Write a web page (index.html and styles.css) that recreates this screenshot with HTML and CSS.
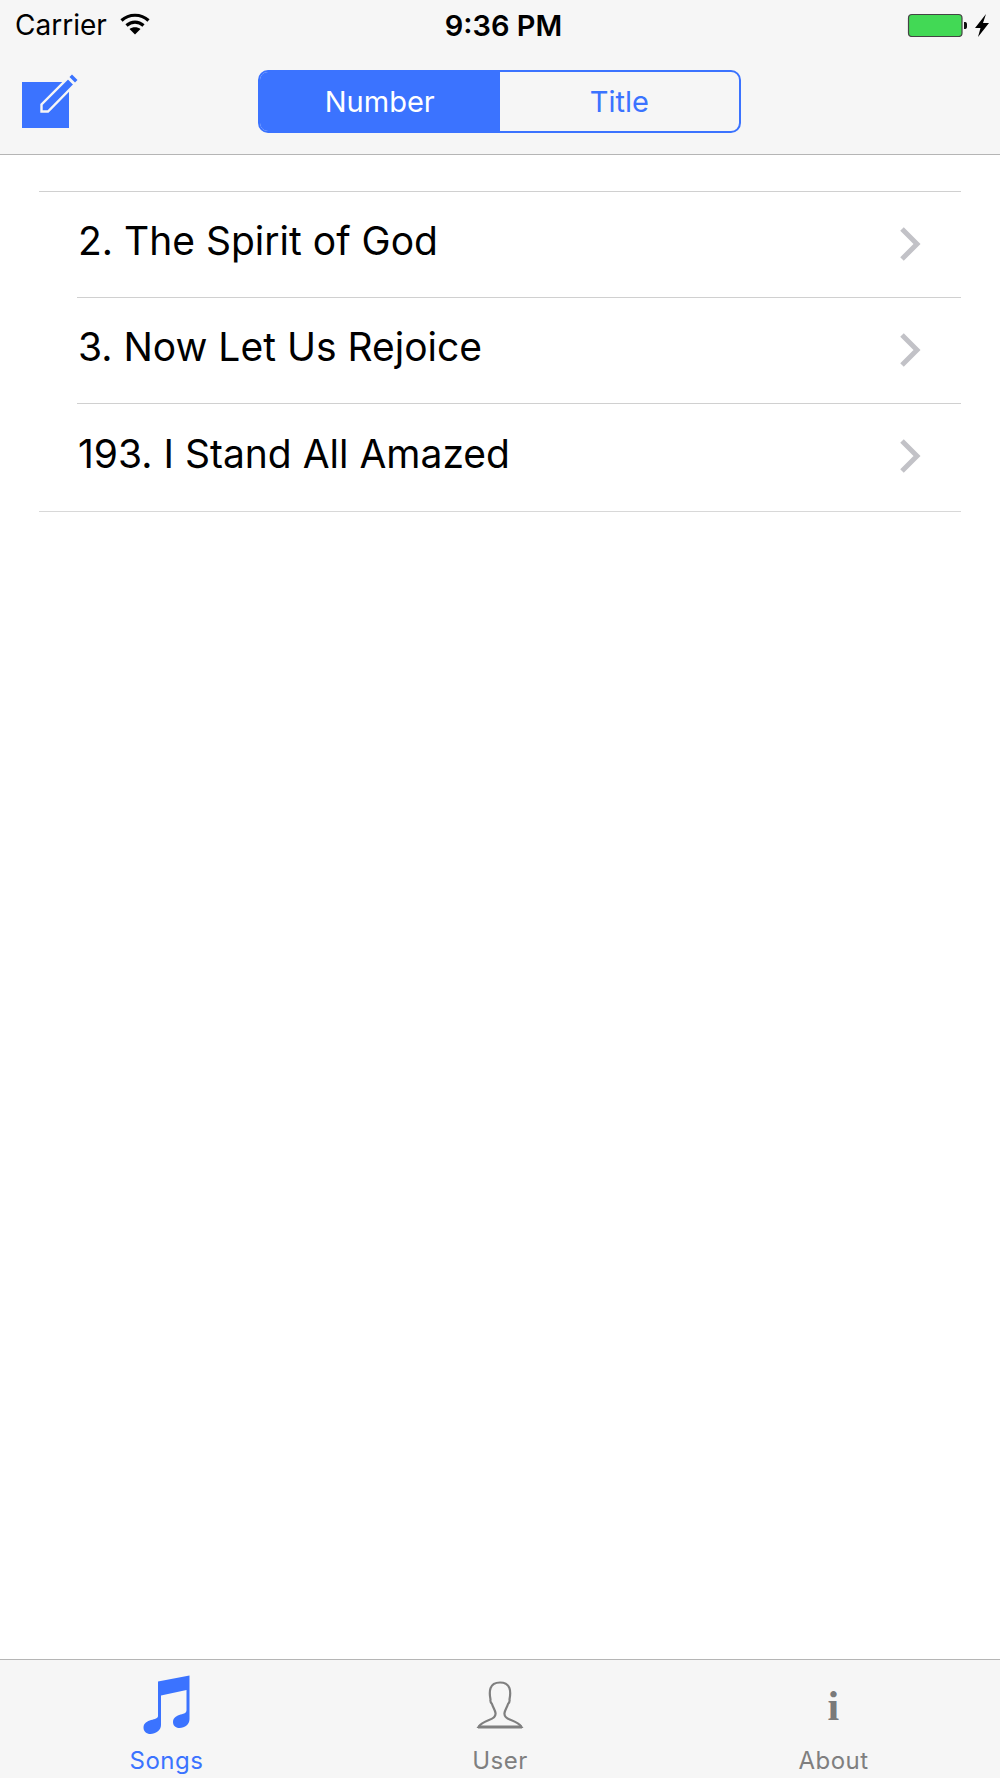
FILE: index.html
```html
<!DOCTYPE html>
<html lang="en">
<head>
  <meta charset="UTF-8" />
  <meta name="viewport" content="width=device-width, initial-scale=1.0" />
  <title>Songs</title>
  <link rel="stylesheet" href="styles.css">
</head>
<body>
  <div class="app">
    <header class="top">
      <div class="status">
        <div class="status-left">
          <span class="carrier">Carrier</span>
          <svg class="wifi" width="30" height="22" viewBox="0 0 30 22">
            <path d="M1.5 7.5C9 .5 21 .5 28.500 7.500" fill="none" stroke="#000" stroke-width="3.200"/>
            <path d="M6.500 12.500C11.500 8 18.500 8 23.500 12.500" fill="none" stroke="#000" stroke-width="3.200"/>
            <path d="M15 21.500L9.500 16C12.500 13.500 17.500 13.500 20.500 16Z" fill="#000"/>
          </svg>
        </div>
        <div class="time">9:36 PM</div>
        <div class="status-right">
          <svg width="84" height="26" viewBox="0 0 84 26">
            <rect x="2.500" y="3.500" width="53.500" height="22" rx="3.500" fill="#42d955" stroke="#444" stroke-width="1.200"/>
            <path d="M58 11h1.500a2 2 0 0 1 1.500 2v3a2 2 0 0 1-1.500 2H58z" fill="#111"/>
            <path d="M80 3L69 17h5.500l-2.500 9L83 12h-6z" fill="#000"/>
          </svg>
        </div>
      </div>
      <nav class="navbar">
        <svg class="edit-icon" width="60" height="56" viewBox="0 0 60 56">
          <rect x="0" y="9" width="47" height="46" fill="#3b73ff"/>
          <path d="M19.500 38.500V31.500L46 5l6.500 6.500L26 38.500z" fill="#3b73ff" stroke="#f6f6f6" stroke-width="2.400"/>
          <path d="M50 1.500l5.500 5.500-2.500 2.500-5.500-5.500z" fill="#3b73ff"/>
        </svg>
        <div class="segmented">
          <div class="seg seg-on">Number</div>
          <div class="seg">Title</div>
        </div>
      </nav>
    </header>

    <main class="content">
      <ul class="songs">
        <li class="song"><span>2. The Spirit of God</span>
          <svg class="chevron" width="22" height="36" viewBox="0 0 22 36"><path d="M3 3l15 15L3 33" fill="none" stroke="#c2c2c7" stroke-width="5"/></svg>
        </li>
        <li class="song"><span>3. Now Let Us Rejoice</span>
          <svg class="chevron" width="22" height="36" viewBox="0 0 22 36"><path d="M3 3l15 15L3 33" fill="none" stroke="#c2c2c7" stroke-width="5"/></svg>
        </li>
        <li class="song"><span>193. I Stand All Amazed</span>
          <svg class="chevron" width="22" height="36" viewBox="0 0 22 36"><path d="M3 3l15 15L3 33" fill="none" stroke="#c2c2c7" stroke-width="5"/></svg>
        </li>
      </ul>
    </main>

    <footer class="tabs">
      <div class="tab tab-on">
        <svg class="tab-icon" width="50" height="62" viewBox="0 0 50 62">
          <path d="M16 9.500L47.500 3.500V47C47.500 52.500 43 56 37.500 56C33.500 56 31 53.500 31 50C31 45.500 35 43.500 38.500 42.500C42.500 41.500 44.500 41 44.500 38V18L19 23.500V53C19 58.500 13.500 62 8.500 62C4.500 62 1.500 59.500 1.500 55.500C1.500 51 5.500 49 9 48C13 47 16 46.500 16 44Z" fill="#3b73ff"/>
        </svg>
        <span>Songs</span>
      </div>
      <div class="tab">
        <svg class="tab-icon" width="50" height="62" viewBox="0 0 50 62">
          <path d="M3.500 55H46.500C44 51 40 49.500 36 48C31.500 46.500 29 44.500 29.500 41C30 38 32 35.500 33 32C34 31 35 29.500 34.500 27.500C36 20 36 10.500 25 10.500C14 10.500 14 20 15.500 27.500C15 29.500 16 31 17 32C18 35.500 20 38 20.500 41C21 44.500 18.500 46.500 14 48C10 49.500 6 51 3.500 55Z" fill="none" stroke="#7f7f7f" stroke-width="2.200"/>
          <path d="M3 55H47" stroke="#7f7f7f" stroke-width="3"/>
        </svg>
        <span>User</span>
      </div>
      <div class="tab">
        <div class="tab-icon info">i</div>
        <span>About</span>
      </div>
    </footer>
  </div>
</body>
</html>
```

FILE: styles.css
```css
* {
  box-sizing: border-box;
}

body {
  margin: 0;
  background: white;
  font-family: Inter, "Liberation Sans", sans-serif;
  color: black;
}

.app {
  display: flex;
  flex-direction: column;
  width: 1000px;
  height: 1778px;
}

.top {
  height: 155px;
  background: #f6f6f6;
  border-bottom: 1.500px solid #b5b5b5;
}

.status {
  display: grid;
  grid-template-columns: 1fr auto 1fr;
  align-items: center;
  height: 50px;
  padding: 0 8px 0 15px;
}

.status-left {
  display: flex;
  align-items: center;
  gap: 13px;
}

.carrier {
  font-size: 28px;
}

.wifi {
  margin-top: -3px;
}

.time {
  font-size: 29px;
  font-weight: 600;
}

.status-right {
  display: flex;
  justify-content: flex-end;
  padding-right: 2px;
  margin-top: -2px;
}

.navbar {
  position: relative;
  display: flex;
  justify-content: center;
  padding-top: 20px;
}

.edit-icon {
  position: absolute;
  left: 22px;
  top: 23px;
}

.segmented {
  display: flex;
  width: 483px;
  height: 63px;
  border: 2.500px solid #3b73ff;
  border-radius: 10px;
  overflow: hidden;
  margin-left: -1px;
}

.seg {
  flex: 1;
  display: flex;
  align-items: center;
  justify-content: center;
  font-size: 29px;
  color: #3b73ff;
}

.seg-on {
  background: #3b73ff;
  color: white;
}

.content {
  flex: 1;
  padding: 36px 39px 0;
}

.songs {
  list-style: none;
  margin: 0;
  padding: 0;
  border-top: 1.500px solid #d0d0d0;
  border-bottom: 1.500px solid #d8d8d8;
}

.song {
  display: flex;
  align-items: center;
  justify-content: space-between;
  height: 106px;
  padding: 0 40px 0 39px;
  font-size: 39px;
}

.song:first-child {
  height: 105px;
}

.song:last-child {
  height: 107.500px;
}

.song span {
  margin-top: -8px;
}

.song + .song {
  border-top: 1.500px solid #d0d0d0;
  margin-left: 38px;
  padding-left: 1px;
}

.chevron {
  margin-top: -2px;
}

.tabs {
  display: flex;
  justify-content: space-between;
  height: 119px;
  background: #f6f6f6;
  border-top: 1.500px solid #b5b5b5;
}

.tab {
  width: 333px;
  display: flex;
  flex-direction: column;
  align-items: center;
  padding-top: 12px;
  font-size: 24px;
  letter-spacing: 0.500px;
  color: #7f7f7f;
}

.tab-on {
  color: #3b73ff;
}

.tab-icon {
  height: 62px;
  margin-bottom: 12px;
}

.info {
  font-family: "Liberation Serif", serif;
  font-weight: bold;
  font-size: 42px;
  line-height: 68px;
  color: #7a7a7a;
}
```
